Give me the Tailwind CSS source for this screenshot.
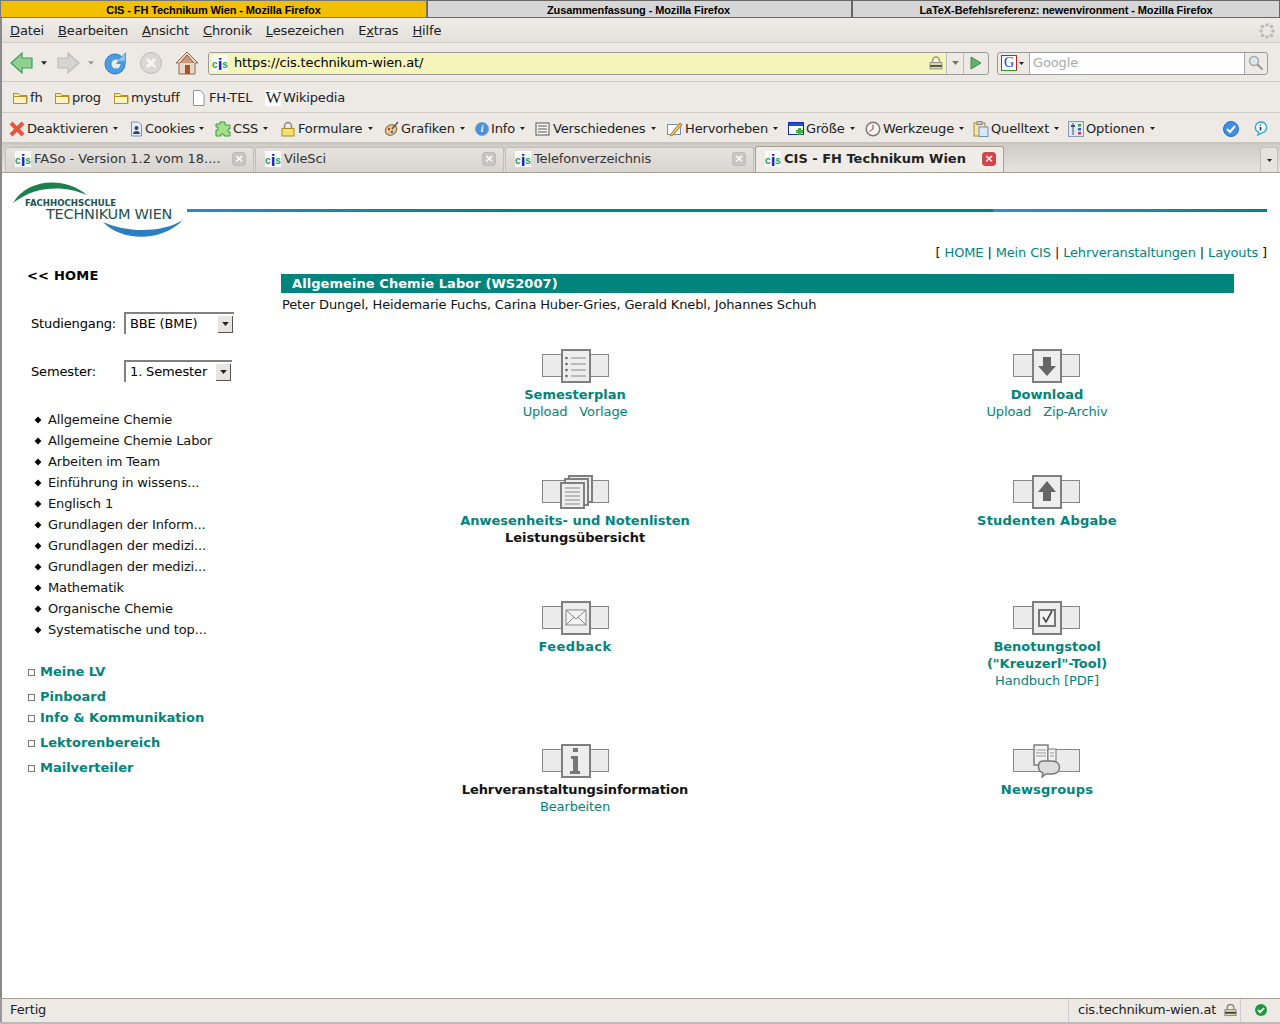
<!DOCTYPE html>
<html lang="de">
<head>
  <meta charset="UTF-8" />
  <title>CIS - FH Technikum Wien</title>
  <script src="https://cdn.jsdelivr.net/npm/@tailwindcss/browser@4"></script>
</head>
<body class="w-[1280px] h-[1024px] overflow-hidden bg-white font-['DejaVu_Sans',sans-serif] text-[13px] tracking-[-0.14px] text-black">

  <svg class="hidden">
    <symbol id="folder" viewBox="0 0 16 16"><path d="M1.5 13.5V3.500h5l1.500 2h7v8z" fill="#f7e7a0" stroke="#b58f1f"/><path d="M1.500 13.500V6.500h13v7z" fill="#fdf3c0" stroke="#b58f1f"/></symbol>
    <symbol id="caret" viewBox="0 0 5 3"><path d="M0 0h5L2.500 3z" fill="#222"/></symbol>
    <symbol id="band" viewBox="0 0 68 34"><rect x="0.500" y="5.500" width="66" height="22" fill="#ebebeb" stroke="#888"/><rect x="20" y="1" width="28" height="32" fill="#ededed" stroke="#7f7f7f" stroke-width="2"/></symbol>
  </svg>

  <!-- Window switcher -->
  <div class="flex h-[18px] font-['Liberation_Sans',sans-serif] font-bold text-[11px] leading-[18px] tracking-[-0.1px] bg-[#d6d6d6]">
    <div class="w-[427px] text-center bg-[#f2c000] border border-[#777]">CIS - FH Technikum Wien - Mozilla Firefox</div>
    <div class="w-[425px] pr-[2px] text-center border border-[#666]">Zusammenfassung - Mozilla Firefox</div>
    <div class="w-[428px] text-center border border-[#666]">LaTeX-Befehlsreferenz: newenvironment - Mozilla Firefox</div>
  </div>

  <div class="border-l-2 border-[#8a8a8a] ml-0 bg-[#edeae5] text-[#222]">
    <!-- Menu -->
    <div class="h-[25px] flex items-center justify-between pl-2 pr-[5px] pt-[2px] bg-gradient-to-b from-[#efece7] to-[#e4e1dc] border-b border-[#cfccc6]">
      <div class="flex gap-[14px]">
        <span><u>D</u>atei</span><span><u>B</u>earbeiten</span><span><u>A</u>nsicht</span><span><u>C</u>hronik</span><span><u>L</u>esezeichen</span><span>E<u>x</u>tras</span><span><u>H</u>ilfe</span>
      </div>
      <svg class="w-4 h-4" viewBox="0 0 16 16"><g fill="#bbb"><circle cx="8" cy="2" r="1.800"/><circle cx="12.500" cy="3.500" r="1.800"/><circle cx="14" cy="8" r="1.800"/><circle cx="12.500" cy="12.500" r="1.800"/><circle cx="8" cy="14" r="1.800"/><circle cx="3.500" cy="12.500" r="1.800"/><circle cx="2" cy="8" r="1.800"/><circle cx="3.500" cy="3.500" r="1.800"/></g></svg>
    </div>

    <!-- Navigation toolbar -->
    <div class="h-[39px] flex items-center border-b border-[#cfccc6] pl-2 pt-[2px]">
      <svg class="w-6 h-6" viewBox="0 0 24 24"><path d="M1 12 12 2v5h10v10H12v5z" fill="#8fd08f" stroke="#3f9a5f" stroke-width="1.200"/></svg>
      <svg class="w-[6px] h-1 ml-[7px]"><use href="#caret"/></svg>
      <svg class="w-6 h-6 ml-[9px]" viewBox="0 0 24 24"><path d="M23 12 12 2v5H2v10h10v5z" fill="#d4d4d0" stroke="#bcbcb8" stroke-width="1.200"/></svg>
      <svg class="w-[6px] h-1 ml-[8px] opacity-40"><use href="#caret"/></svg>
      <svg class="w-6 h-6 ml-[9px]" viewBox="0 0 24 24"><circle cx="12" cy="13" r="10" fill="#4a9be0" stroke="#2f78c0"/><circle cx="13" cy="13" r="4.500" fill="#edeae5"/><path d="M13 13h10V1l-5 5z" fill="#4a9be0"/><path d="M14 10h8V3z" fill="#8cc4f0"/></svg>
      <svg class="w-6 h-6 ml-[12px]" viewBox="0 0 24 24"><circle cx="12" cy="12" r="10.500" fill="#d8d8d4" stroke="#bdbdb9"/><path d="m8 8 8 8m0-8-8 8" stroke="#f5f5f3" stroke-width="3"/></svg>
      <svg class="w-6 h-6 ml-[12px]" viewBox="0 0 24 24"><path d="M12 1 1 12h3v11h16V12h3z" fill="#e8d6c4" stroke="#8f6a50"/><path d="M5 12 12 4l7 8" fill="#c99a7c" stroke="#8f5a40"/><rect x="10" y="14" width="5" height="9" fill="#a8522a"/></svg>

      <div class="ml-[9px] w-[781px] h-[23px] flex items-stretch border border-[#9a9a9a] rounded-[3px] overflow-hidden">
        <div class="flex-1 flex items-center bg-[#f5f4bb] pl-[3px]">
          <span class="w-4 h-4 bg-white flex items-end justify-center font-bold leading-[12px] tracking-normal shrink-0 font-['Liberation_Sans',sans-serif]"><span class="text-[10px] text-[#22a04a]">c</span><span class="text-[17px] text-[#1020d0]">i</span><span class="text-[10px] text-[#22a04a]">s</span></span>
          <span class="ml-[6px] text-black">https://cis.technikum-wien.at/</span>
          <svg class="ml-auto mr-[3px] w-[14px] h-[14px]" viewBox="0 0 14 14"><path d="M3.500 7V4.500a3.500 3.500 0 0 1 7 0V7" fill="none" stroke="#999" stroke-width="1.500"/><rect x="1" y="6.500" width="12" height="6.500" fill="#d9d6a0" stroke="#999"/><path d="M1 9h12v2H1z" fill="#555"/></svg>
        </div>
        <div class="w-[17px] flex items-center justify-center border-l border-[#bbb]"><svg class="w-[7px] h-1 opacity-60"><use href="#caret"/></svg></div>
        <div class="w-[25px] flex items-center justify-center border-l border-[#bbb]"><svg class="w-3 h-[14px]" viewBox="0 0 12 14"><path d="M1 1l10 6-10 6z" fill="#62b06a" stroke="#3f8f4f"/></svg></div>
      </div>

      <div class="ml-2 w-[271px] h-[23px] flex items-stretch border border-[#9a9a9a] rounded-[3px] overflow-hidden">
        <div class="w-[31px] flex items-center pl-[3px] gap-[2px]">
          <span class="w-4 h-4 bg-white border border-[#2a50c0] border-r-[#c02020] border-b-[#20a030] text-[#1a40c0] text-[14px] leading-[14px] text-center font-['Liberation_Serif',serif]">G</span>
          <svg class="w-[5px] h-[3px]"><use href="#caret"/></svg>
        </div>
        <div class="flex-1 flex items-center bg-white pl-[3px] text-[#aaa] border-x border-[#aaa]">Google</div>
        <div class="w-[22px] flex items-center justify-center"><svg class="w-4 h-4" viewBox="0 0 16 16"><circle cx="6" cy="6" r="4.500" fill="#dbe6ef" stroke="#a8a8a8" stroke-width="1.500"/><path d="m9.500 9.500 5 5" stroke="#999" stroke-width="2.200"/></svg></div>
      </div>
    </div>

    <!-- Bookmarks -->
    <div class="h-[31px] flex items-center border-b border-[#cfccc6] pl-[10px] pt-[2px]">
      <div class="w-[42px] flex items-center gap-[2px]"><svg class="w-4 h-4"><use href="#folder"/></svg>fh</div>
      <div class="w-[59px] flex items-center gap-[2px]"><svg class="w-4 h-4"><use href="#folder"/></svg>prog</div>
      <div class="w-[79px] flex items-center gap-[2px]"><svg class="w-4 h-4"><use href="#folder"/></svg>mystuff</div>
      <div class="w-[73px] flex items-center gap-[4px]"><svg class="w-[13px] h-4" viewBox="0 0 13 16"><path d="M1.500.500h7l3.500 4v11H1.500z" fill="#fff" stroke="#8a93a8"/></svg>FH-TEL</div>
      <div class="flex items-center gap-[2px]"><span class="w-4 h-4 bg-white text-center text-[17px] leading-4 tracking-[-1px] font-['Liberation_Serif',serif] text-[#222]">W</span>Wikipedia</div>
    </div>

    <!-- Web Developer toolbar -->
    <div class="h-[31px] flex items-center border-b-2 border-[#c8c5bf] pl-[7px] pt-[2px]">
      <div class="w-[120px] flex items-center gap-[2px]"><svg class="w-4 h-4" viewBox="0 0 16 16"><path d="m2 2 12 12M14 2 2 14" stroke="#e8553f" stroke-width="4"/></svg>Deaktivieren<svg class="w-[5px] h-[3px] ml-[3px]"><use href="#caret"/></svg></div>
      <div class="w-[86px] flex items-center gap-[1px]"><svg class="w-[15px] h-4" viewBox="0 0 15 16"><path d="M2.500 1h7l3 3v11h-10z" fill="#e3ecfa" stroke="#7d8fc8"/><circle cx="7.500" cy="7" r="2" fill="#345"/><path d="M4 13c0-4 7-4 7 0z" fill="#345"/></svg>Cookies<svg class="w-[5px] h-[3px] ml-[3px]"><use href="#caret"/></svg></div>
      <div class="w-[66px] flex items-center gap-[2px]"><svg class="w-4 h-4" viewBox="0 0 16 16"><path d="M5 1h5v3h5v4h-2v3h2v4H9v-2H6v2H1V9h2V6H1V3h4z" fill="#a5e08c" stroke="#3f9a3f"/></svg>CSS<svg class="w-[5px] h-[3px] ml-[3px]"><use href="#caret"/></svg></div>
      <div class="w-[103px] flex items-center gap-[3px]"><svg class="w-[14px] h-4" viewBox="0 0 14 16"><path d="M3.500 8V5a3.500 3.500 0 0 1 7 0v3" fill="none" stroke="#8a8a8a" stroke-width="1.500"/><rect x="1" y="7.500" width="12" height="7.500" fill="#f5e070" stroke="#a88f20"/></svg>Formulare<svg class="w-[5px] h-[3px] ml-[3px]"><use href="#caret"/></svg></div>
      <div class="w-[91px] flex items-center gap-[2px]"><svg class="w-[15px] h-4" viewBox="0 0 15 16"><ellipse cx="7" cy="9" rx="6" ry="5" fill="#e8c98a" stroke="#806030" transform="rotate(-30 7 9)"/><circle cx="5" cy="8" r="1.200" fill="#d03030"/><circle cx="8" cy="11" r="1.200" fill="#3060d0"/><path d="m8 8 6-7" stroke="#555" stroke-width="1.500"/></svg>Grafiken<svg class="w-[5px] h-[3px] ml-[3px]"><use href="#caret"/></svg></div>
      <div class="w-[60px] flex items-center gap-[2px]"><span class="w-[14px] h-[14px] rounded-full bg-[#4a90e0] border border-[#7aa0d0] text-white text-[10px] leading-[12px] text-center font-bold italic font-['Liberation_Serif',serif]">i</span>Info<svg class="w-[5px] h-[3px] ml-[3px]"><use href="#caret"/></svg></div>
      <div class="w-[132px] flex items-center gap-[3px]"><svg class="w-[15px] h-[14px]" viewBox="0 0 15 14"><rect x="1" y="1" width="13" height="12" fill="#f6f6f4" stroke="#555"/><path d="M3 4h9M3 7h9M3 10h9" stroke="#555"/></svg>Verschiedenes<svg class="w-[5px] h-[3px] ml-[3px]"><use href="#caret"/></svg></div>
      <div class="w-[121px] flex items-center gap-[2px]"><svg class="w-4 h-4" viewBox="0 0 16 16"><rect x="0.500" y="3.500" width="13" height="10" fill="#fff" stroke="#7a8ab0"/><path d="M3 14 13 2l2 2L5 15z" fill="#f0c850" stroke="#a07a20"/></svg>Hervorheben<svg class="w-[5px] h-[3px] ml-[3px]"><use href="#caret"/></svg></div>
      <div class="w-[77px] flex items-center gap-[2px]"><svg class="w-4 h-[14px]" viewBox="0 0 16 14"><rect x="0.500" y="0.500" width="15" height="12" fill="#fff" stroke="#1030a0"/><path d="M1 1h14v3H1z" fill="#2050d0"/><path d="M10 6h3v2h2v3h-2v2h-3v-2H8V8h2z" fill="#40b040"/></svg>Größe<svg class="w-[5px] h-[3px] ml-[3px]"><use href="#caret"/></svg></div>
      <div class="w-[108px] flex items-center gap-[2px]"><svg class="w-4 h-4" viewBox="0 0 16 16"><circle cx="8" cy="8" r="6.800" fill="#f3f3f3" stroke="#777" stroke-width="1.400"/><path d="M8 3.500V8L4.500 10.500" fill="none" stroke="#a04040"/></svg>Werkzeuge<svg class="w-[5px] h-[3px] ml-[3px]"><use href="#caret"/></svg></div>
      <div class="w-[95px] flex items-center gap-[2px]"><svg class="w-4 h-4" viewBox="0 0 16 16"><rect x="1" y="2" width="11" height="13" fill="#f5e3a8" stroke="#b08a30"/><rect x="4" y="0.500" width="5" height="3" fill="#ccc" stroke="#888"/><rect x="6" y="6" width="9" height="9.500" fill="#dbe8fa" stroke="#6f8fc0"/></svg>Quelltext<svg class="w-[5px] h-[3px] ml-[3px]"><use href="#caret"/></svg></div>
      <div class="w-[155px] flex items-center gap-[2px]"><svg class="w-4 h-4" viewBox="0 0 16 16"><rect x="0.500" y="0.500" width="15" height="15" fill="#dfe8f2" stroke="#8a9ab0"/><path d="M5 2v12" stroke="#456"/><path d="M3 5h4" stroke="#456" stroke-width="2"/><rect x="10" y="3" width="3" height="2.500" fill="#40a040"/><rect x="10" y="7" width="3" height="2.500" fill="#3060c0"/><rect x="10" y="11" width="3" height="2.500" fill="#c04040"/></svg>Optionen<svg class="w-[5px] h-[3px] ml-[3px]"><use href="#caret"/></svg></div>
      <svg class="w-4 h-4" viewBox="0 0 16 16"><circle cx="8" cy="8" r="7.500" fill="#3f8fe8" stroke="#2a6fc0"/><path d="m4 8 3 3 5-6" fill="none" stroke="#fff" stroke-width="2"/></svg>
      <svg class="w-[15px] h-[15px] ml-[14px]" viewBox="0 0 15 15"><path d="M7.500 1a6 5.500 0 0 1 2 10.700L5 14l.8-2.600A6 5.500 0 0 1 7.500 1z" fill="#fff" stroke="#30a8e0" stroke-width="1.400"/><path d="M7.500 3.500v1M7.500 6v3.500" stroke="#135" stroke-width="1.600"/></svg>
    </div>

    <!-- Tabs -->
    <div class="h-[29px] flex items-end pl-[3px] pr-[2px] bg-gradient-to-b from-[#cfccc7] to-[#e6e3de] border-b border-[#a79f92]">
      <div class="w-[249px] h-[25px] pb-[2px] mr-[1px] flex items-center pl-[9px] pr-[7px] bg-gradient-to-b from-[#e6e3de] to-[#d8d5d0] border border-b-0 border-[#c2bfb9] rounded-t-[3px]">
        <span class="w-4 h-4 bg-white flex items-end justify-center font-bold leading-[12px] tracking-normal shrink-0 font-['Liberation_Sans',sans-serif]"><span class="text-[10px] text-[#22a04a]">c</span><span class="text-[17px] text-[#1020d0]">i</span><span class="text-[10px] text-[#22a04a]">s</span></span>
        <span class="ml-[3px] tracking-normal text-[#333]">FASo - Version 1.2 vom 18....</span>
        <span class="ml-auto w-[14px] h-[14px] rounded-[3px] bg-[#c9c6c1] border border-[#bbb] text-white text-[11px] leading-[12px] text-center font-bold">×</span>
      </div>
      <div class="w-[249px] h-[25px] pb-[2px] mr-[1px] flex items-center pl-[9px] pr-[7px] bg-gradient-to-b from-[#e6e3de] to-[#d8d5d0] border border-b-0 border-[#c2bfb9] rounded-t-[3px]">
        <span class="w-4 h-4 bg-white flex items-end justify-center font-bold leading-[12px] tracking-normal shrink-0 font-['Liberation_Sans',sans-serif]"><span class="text-[10px] text-[#22a04a]">c</span><span class="text-[17px] text-[#1020d0]">i</span><span class="text-[10px] text-[#22a04a]">s</span></span>
        <span class="ml-[3px] text-[#333]">VileSci</span>
        <span class="ml-auto w-[14px] h-[14px] rounded-[3px] bg-[#c9c6c1] border border-[#bbb] text-white text-[11px] leading-[12px] text-center font-bold">×</span>
      </div>
      <div class="w-[249px] h-[25px] pb-[2px] mr-[1px] flex items-center pl-[9px] pr-[7px] bg-gradient-to-b from-[#e6e3de] to-[#d8d5d0] border border-b-0 border-[#c2bfb9] rounded-t-[3px]">
        <span class="w-4 h-4 bg-white flex items-end justify-center font-bold leading-[12px] tracking-normal shrink-0 font-['Liberation_Sans',sans-serif]"><span class="text-[10px] text-[#22a04a]">c</span><span class="text-[17px] text-[#1020d0]">i</span><span class="text-[10px] text-[#22a04a]">s</span></span>
        <span class="ml-[3px] text-[#333]">Telefonverzeichnis</span>
        <span class="ml-auto w-[14px] h-[14px] rounded-[3px] bg-[#c9c6c1] border border-[#bbb] text-white text-[11px] leading-[12px] text-center font-bold">×</span>
      </div>
      <div class="w-[249px] h-[26px] pb-[2px] flex items-center pl-[9px] pr-[7px] bg-[#efece8] border border-b-0 border-[#a79f92] rounded-t-[3px]">
        <span class="w-4 h-4 bg-white flex items-end justify-center font-bold leading-[12px] tracking-normal shrink-0 font-['Liberation_Sans',sans-serif]"><span class="text-[10px] text-[#22a04a]">c</span><span class="text-[17px] text-[#1020d0]">i</span><span class="text-[10px] text-[#22a04a]">s</span></span>
        <span class="ml-[3px] font-bold tracking-normal text-[#222]">CIS - FH Technikum Wien</span>
        <span class="ml-auto w-[14px] h-[14px] rounded-[3px] bg-[#d9404a] border border-[#b55] text-white text-[11px] leading-[12px] text-center font-bold">×</span>
      </div>
      <div class="ml-auto w-[18px] h-[25px] flex items-center justify-center bg-[#e6e3de] border border-b-0 border-[#c2bfb9] rounded-t-[3px]"><svg class="w-[5px] h-[3px]"><use href="#caret"/></svg></div>
    </div>
  </div>

  <!-- Page -->
  <div class="h-[825px] border-l-2 border-[#8a8a8a] bg-white">
    <!-- Page header -->
    <div class="h-[66px] flex items-start">
      <div class="relative w-[185px] h-[66px] shrink-0">
        <svg class="absolute left-0 top-0" width="185" height="66" viewBox="0 1 185 66"><path d="M11 31C25 7 62 4 85 23 65 14 35 12 11 31z" fill="#1d7f4e"/><path d="M101 50C120 70 160 70 181 48 160 61 125 61 101 50z" fill="#2a7fc4"/></svg>
        <span class="absolute left-[23px] top-[24px] text-[8.600px] font-bold tracking-normal text-[#24514f] whitespace-nowrap">FACHHOCHSCHULE</span>
        <span class="absolute left-[44px] top-[31px] text-[14.500px] tracking-[-0.250px] text-[#24514f] whitespace-nowrap">TECHNIKUM WIEN</span>
      </div>
      <div class="mt-[36px] w-[806px] h-[3px] bg-gradient-to-r from-[#2a88d0] to-[#00847c] to-40%"></div>
      <div class="mt-[36px] w-[274px] h-[3px] bg-gradient-to-r from-[#338cd8] to-[#00847c]"></div>
    </div>

    <div class="text-right pr-[13px] h-[35px] pt-[4px] text-[#111]">[ <a class="text-[#00847c]">HOME</a> | <a class="text-[#00847c]">Mein CIS</a> | <a class="text-[#00847c]">Lehrveranstaltungen</a> | <a class="text-[#00847c]">Layouts</a> ]</div>

    <div class="flex">
      <!-- Sidebar -->
      <div class="w-[279px] shrink-0 pl-[26px]">
        <div class="font-bold tracking-[0.2px] ml-[-1px] mt-[-8px] h-[46px] leading-[20px]">&lt;&lt; HOME</div>
        <div class="flex items-center h-[22px] pl-[3px]">
          <span class="w-[93px] pt-[2px]">Studiengang:</span>
          <div class="w-[110px] h-[22px] flex items-center justify-between border-2 border-r-0 border-b-0 border-[#808080] pl-1 pr-[1px]">BBE (BME)<span class="w-[15px] h-[17px] bg-[#e8e5e0] border-r border-b border-[#555] flex items-center justify-center"><svg class="w-[7px] h-1"><use href="#caret"/></svg></span></div>
        </div>
        <div class="flex items-center h-[22px] pl-[3px] mt-[26px]">
          <span class="w-[93px] pt-[2px]">Semester:</span>
          <div class="w-[108px] h-[22px] flex items-center justify-between border-2 border-r-0 border-b-0 border-[#808080] pl-1 pr-[1px]">1. Semester<span class="w-[15px] h-[17px] bg-[#e8e5e0] border-r border-b border-[#555] flex items-center justify-center"><svg class="w-[7px] h-1"><use href="#caret"/></svg></span></div>
        </div>

        <ul class="mt-[27px] pl-[7px] leading-[21px] text-[#111]">
          <li class="flex items-center gap-[7px]"><span class="w-[6px] h-[6px] bg-black rotate-45 scale-[0.8]"></span>Allgemeine Chemie</li>
          <li class="flex items-center gap-[7px]"><span class="w-[6px] h-[6px] bg-black rotate-45 scale-[0.8]"></span>Allgemeine Chemie Labor</li>
          <li class="flex items-center gap-[7px]"><span class="w-[6px] h-[6px] bg-black rotate-45 scale-[0.8]"></span>Arbeiten im Team</li>
          <li class="flex items-center gap-[7px]"><span class="w-[6px] h-[6px] bg-black rotate-45 scale-[0.8]"></span>Einführung in wissens...</li>
          <li class="flex items-center gap-[7px]"><span class="w-[6px] h-[6px] bg-black rotate-45 scale-[0.8]"></span>Englisch 1</li>
          <li class="flex items-center gap-[7px]"><span class="w-[6px] h-[6px] bg-black rotate-45 scale-[0.8]"></span>Grundlagen der Inform...</li>
          <li class="flex items-center gap-[7px]"><span class="w-[6px] h-[6px] bg-black rotate-45 scale-[0.8]"></span>Grundlagen der medizi...</li>
          <li class="flex items-center gap-[7px]"><span class="w-[6px] h-[6px] bg-black rotate-45 scale-[0.8]"></span>Grundlagen der medizi...</li>
          <li class="flex items-center gap-[7px]"><span class="w-[6px] h-[6px] bg-black rotate-45 scale-[0.8]"></span>Mathematik</li>
          <li class="flex items-center gap-[7px]"><span class="w-[6px] h-[6px] bg-black rotate-45 scale-[0.8]"></span>Organische Chemie</li>
          <li class="flex items-center gap-[7px]"><span class="w-[6px] h-[6px] bg-black rotate-45 scale-[0.8]"></span>Systematische und top...</li>
        </ul>

        <div class="mt-[21px] font-bold tracking-normal text-[#00847c] leading-[21px]">
          <div class="flex items-center gap-[5px]"><span class="w-[7px] h-[7px] border border-[#777] mt-[2px]"></span>Meine LV</div>
          <div class="flex items-center gap-[5px] mt-[4px]"><span class="w-[7px] h-[7px] border border-[#777] mt-[2px]"></span>Pinboard</div>
          <div class="flex items-center gap-[5px]"><span class="w-[7px] h-[7px] border border-[#777] mt-[2px]"></span>Info &amp; Kommunikation</div>
          <div class="flex items-center gap-[5px] mt-[4px]"><span class="w-[7px] h-[7px] border border-[#777] mt-[2px]"></span>Lektorenbereich</div>
          <div class="flex items-center gap-[5px] mt-[4px]"><span class="w-[7px] h-[7px] border border-[#777] mt-[2px]"></span>Mailverteiler</div>
        </div>
      </div>

      <!-- Main -->
      <div class="w-[953px]">
        <div class="h-[19px] bg-[#00847c] text-white font-bold tracking-[0.07px] pl-[11px] leading-[19px]">Allgemeine Chemie Labor (WS2007)</div>
        <div class="pl-[1px] mt-[3px] h-[20px] leading-[17px] text-[#111]">Peter Dungel, Heidemarie Fuchs, Carina Huber-Gries, Gerald Knebl, Johannes Schuh</div>

        <div class="grid grid-cols-[588px_356px] grid-rows-[126px_126px_143px_100px] mt-[33px] text-center leading-[17px] text-[#00847c]">
          <div class="flex flex-col items-center">
            <svg class="w-[68px] h-[34px] mb-[3px] ml-[2px]" viewBox="0 0 68 34"><use href="#band"/><g stroke="#888"><path d="M29 9h15M29 15h15M29 21h15M29 27h15"/></g><g fill="#666"><circle cx="24.500" cy="9" r="1.300"/><circle cx="24.500" cy="15" r="1.300"/><circle cx="24.500" cy="21" r="1.300"/><circle cx="24.500" cy="27" r="1.300"/></g></svg>
            <b class="tracking-normal">Semesterplan</b>
            <div class="flex gap-3"><span>Upload</span><span>Vorlage</span></div>
          </div>
          <div class="flex flex-col items-center">
            <svg class="w-[68px] h-[34px] mb-[3px]" viewBox="0 0 68 34"><use href="#band"/><path d="M30 8h8v9h5L34 27 25 17h5z" fill="#666"/></svg>
            <b class="tracking-normal">Download</b>
            <div class="flex gap-3"><span>Upload</span><span>Zip-Archiv</span></div>
          </div>

          <div class="flex flex-col items-center">
            <svg class="w-[68px] h-[34px] mb-[3px] ml-[2px]" viewBox="0 0 68 34"><rect x="0.500" y="5.500" width="66" height="22" fill="#ebebeb" stroke="#888"/><rect x="27" y="1" width="23" height="26" fill="#eee" stroke="#7f7f7f" stroke-width="2"/><rect x="23" y="4" width="23" height="26" fill="#eee" stroke="#7f7f7f" stroke-width="2"/><rect x="19" y="8" width="23" height="25" fill="#eee" stroke="#7f7f7f" stroke-width="2"/><path d="M23 13h15M23 17h15M23 21h15M23 25h15M23 29h15" stroke="#888"/></svg>
            <b class="tracking-normal">Anwesenheits- und Notenlisten</b>
            <b class="tracking-normal text-[#111]">Leistungsübersicht</b>
          </div>
          <div class="flex flex-col items-center">
            <svg class="w-[68px] h-[34px] mb-[3px]" viewBox="0 0 68 34"><use href="#band"/><path d="M30 26v-9h-5l9-11 9 11h-5v9z" fill="#666"/></svg>
            <b class="tracking-[0.2px]">Studenten Abgabe</b>
          </div>

          <div class="flex flex-col items-center">
            <svg class="w-[68px] h-[34px] mb-[3px] ml-[2px]" viewBox="0 0 68 34"><use href="#band"/><rect x="24" y="9" width="20" height="15" fill="#f2f2f2" stroke="#888"/><path d="m24 9 10 9 10-9M24 24l8-8M44 24l-8-8" fill="none" stroke="#888"/></svg>
            <b class="tracking-[0.4px]">Feedback</b>
          </div>
          <div class="flex flex-col items-center">
            <svg class="w-[68px] h-[34px] mb-[3px]" viewBox="0 0 68 34"><use href="#band"/><rect x="26" y="9" width="16" height="16" fill="#f2f2f2" stroke="#777" stroke-width="2"/><path d="m30 16 3 5 6-11" fill="none" stroke="#444" stroke-width="1.600"/></svg>
            <b class="tracking-normal">Benotungstool</b>
            <b class="tracking-normal">("Kreuzerl"-Tool)</b>
            <span>Handbuch [PDF]</span>
          </div>

          <div class="flex flex-col items-center">
            <svg class="w-[68px] h-[34px] mb-[3px] ml-[2px]" viewBox="0 0 68 34"><use href="#band"/><path d="M31 4h5v4h-5zM29 12h7v15h2v3H28v-3h3V15h-2z" fill="#777"/></svg>
            <b class="tracking-[-0.1px] text-[#111]">Lehrveranstaltungsinformation</b>
            <span>Bearbeiten</span>
          </div>
          <div class="flex flex-col items-center">
            <svg class="w-[68px] h-[34px] mb-[3px]" viewBox="0 0 68 34"><rect x="0.500" y="5.500" width="66" height="22" fill="#ebebeb" stroke="#888"/><rect x="21" y="1" width="14" height="20" fill="#f2f2f2" stroke="#777" stroke-width="1.400"/><rect x="35" y="5" width="8" height="16" fill="#f2f2f2" stroke="#777"/><path d="M23 6h10M23 9h10M23 12h10M37 9h4M37 12h4" stroke="#999"/><path d="M30 17h9c10 0 10 13 0 13h-6l-4 3 1-4c-6-2-6-12 0-12z" fill="#ddd" stroke="#777" stroke-width="1.400"/></svg>
            <b class="tracking-[0.2px]">Newsgroups</b>
          </div>
        </div>
      </div>
    </div>
  </div>

  <!-- Status bar -->
  <div class="h-[26px] flex items-center bg-[#edeae5] border-t border-[#a79f92] border-b-2 border-b-[#bbb] text-[#222]">
    <div class="w-[1069px] h-full flex items-center pl-[8px] pb-[2px] border-l-2 border-[#999] border-r border-r-[#ccc]">Fertig</div>
    <div class="w-[172px] h-full flex items-center pl-[9px] pb-[2px] border-r border-[#ccc] whitespace-nowrap tracking-[-0.2px]">
      cis.technikum-wien.at
      <svg class="ml-2 w-[13px] h-[14px] shrink-0" viewBox="0 0 14 14"><path d="M3.500 7V4.500a3.500 3.500 0 0 1 7 0V7" fill="none" stroke="#888" stroke-width="1.500"/><rect x="1" y="6.500" width="12" height="6.500" fill="#d9d6a0" stroke="#888"/><path d="M1 9h12v2H1z" fill="#444"/></svg>
    </div>
    <div class="flex-1 flex items-center justify-center pb-[2px]">
      <svg class="w-3 h-3" viewBox="0 0 12 12"><circle cx="6" cy="6" r="6" fill="#1a9a3a"/><path d="m3 6 2.200 2.200L9 4" fill="none" stroke="#fff" stroke-width="1.800"/></svg>
    </div>
  </div>
</body>
</html>
